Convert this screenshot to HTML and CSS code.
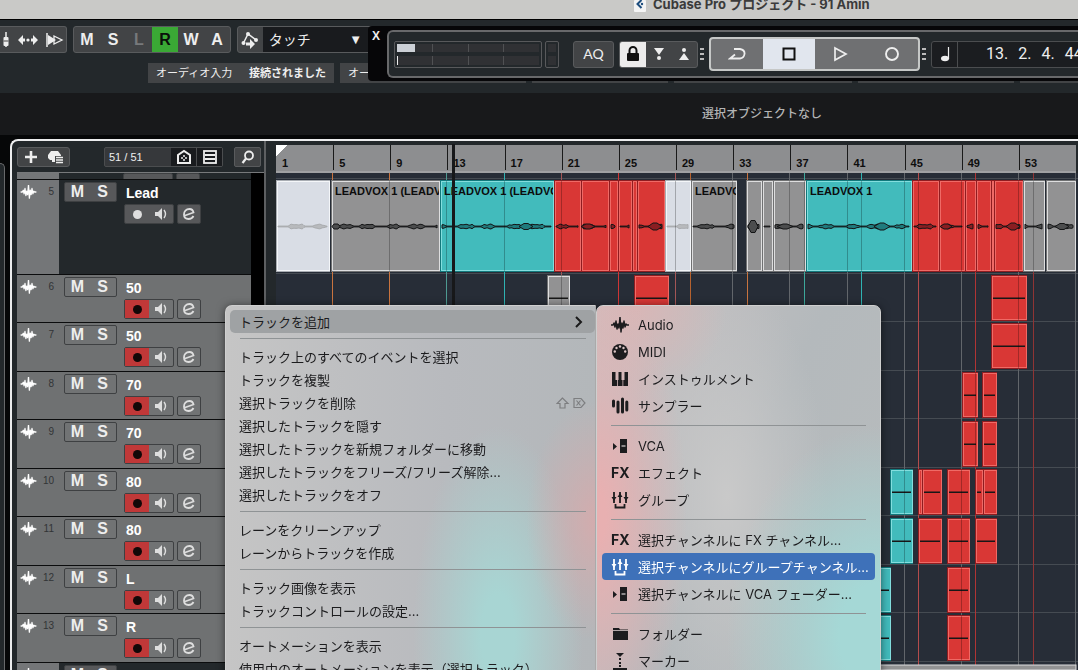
FILE: index.html
```html
<!DOCTYPE html>
<html lang="ja">
<head>
<meta charset="utf-8">
<title>Cubase Pro プロジェクト - 91 Amin</title>
<link rel="stylesheet" href="styles.css">
</head>
<body>
<svg class="defs" aria-hidden="true">
  <symbol id="i-wave" viewBox="0 0 18 16"><path d="M0 8h2l1-2 1 4 1-6 1 8 1-5 1 4 1-11 1 15 1-9 1 5 1-7 1 6 1-3 1 1h2" fill="none" stroke="currentColor" stroke-width="1.5" stroke-linejoin="round"/></symbol>
  <symbol id="i-spk" viewBox="0 0 14 14"><path d="M1 5h3l4-4v12L4 9H1z" fill="currentColor"/><path d="M10 3q3 4 0 8" fill="none" stroke="currentColor" stroke-width="1.4"/></symbol>
  <symbol id="i-e" viewBox="0 0 14 14"><path d="M3 8.500 11.500 5.500C11 3 9 2 7.500 2 4 2 2 4.500 2 7.500 2 10.500 4 12 6.500 12c2 0 4-1 5-3" fill="none" stroke="currentColor" stroke-width="1.800"/></symbol>
  <symbol id="i-group" viewBox="0 0 18 18"><path d="M3 1v11M9 1v11M15 1v11M4.500 13v3.500h9V13" fill="none" stroke="currentColor" stroke-width="1.8"/><path d="M.5 6h5L3 10zM6.500 6 9 2l2.500 4zM12.500 6h5L15 10z" fill="currentColor"/></symbol>
  <symbol id="i-vca" viewBox="0 0 18 18"><path d="M2 6l4 3.500L2 13zM9 2h7v14H9z" fill="currentColor"/><path d="M10.500 9h4" stroke="#d5d0d0" stroke-width="1.200"/></symbol>
</svg>
<div class="app">
  <header class="titlebar">
    <svg class="doc" viewBox="0 0 12 12"><rect width="12" height="12" rx="1" fill="#f4f4f4"/><path d="M7.500 0 3.500 4l4 4" fill="none" stroke="#1d4d7d" stroke-width="2"/><circle cx="8" cy="4" r="1.200" fill="#1d4d7d"/></svg>
    <span>Cubase Pro プロジェクト - 91 Amin</span>
  </header>

  <section class="toolbar">
    <div class="tools">
      <div class="group first">
        <button aria-label="ミキサー"><svg width="14" height="18" viewBox="0 0 14 18"><path d="M2 1v14M10 1v15" stroke="#eee" stroke-width="1.5"/><rect x="7.500" y="6" width="5" height="9" rx="1" fill="#eee"/><path d="M7.500 10h5" stroke="#444"/></svg></button>
        <button aria-label="幅"><svg width="20" height="12" viewBox="0 0 20 12"><path d="M0 6l5-5v3.500h2v3H5V11zM20 6l-5-5v3.500h-2v3h2V11z" fill="#eee"/><circle cx="10" cy="6" r="1.600" fill="#eee"/></svg></button>
        <button aria-label="早送り"><svg width="18" height="14" viewBox="0 0 18 14"><path d="M1 0v14" stroke="#eee" stroke-width="1.500"/><path d="M2 2l8 5-8 5z" fill="#eee"/><path d="M8 3l8 4-8 4z" fill="none" stroke="#eee" stroke-width="1.300"/></svg></button>
      </div>
      <div class="group letters">
        <button>M</button><button>S</button><button class="off">L</button><button class="read">R</button><button>W</button><button>A</button>
      </div>
      <div class="group auto">
        <button aria-label="オートメーション"><svg width="18" height="18" viewBox="0 0 18 18"><path d="M2.500 12 7 3l8 6" fill="none" stroke="#eee" stroke-width="1.500"/><circle cx="7" cy="3" r="2" fill="#eee"/><circle cx="2.500" cy="12" r="2" fill="#eee"/><circle cx="15" cy="9" r="2" fill="#eee"/><path d="M5 11.500h4V8l5 5-5 5v-3.500H5z" fill="#eee"/></svg></button>
        <select aria-label="オートメーションモード"><option>タッチ</option></select>
        <span class="caret">▼</span>
      </div>
    </div>
    <div class="chips">
      <div class="chip"><span>オーディオ入力</span><b>接続されました</b></div>
      <div class="chip"><span>オーディオ出力</span></div>
      <div class="chip"></div><div class="chip"></div><div class="chip"></div><div class="chip"></div>
    </div>
    <div class="transport">
      <button class="close" aria-label="閉じる">X</button>
      <div class="frame">
        <div class="meter"><div class="lane"><i></i><i></i><i></i><i></i></div><div class="lane low"><i></i><i></i><i></i><i></i></div></div>
        <div class="meter mini"><div class="lane"><i></i></div><div class="lane low"><i></i></div></div>
        <button class="aq">AQ</button>
        <div class="punch">
          <button class="lock" aria-label="ロック"><svg width="14" height="16" viewBox="0 0 14 16"><path d="M3.500 8V4.500a3.500 3.500 0 0 1 7 0V8" fill="none" stroke="#111" stroke-width="2"/><rect x="1" y="7" width="12" height="8" rx="1" fill="#111"/></svg></button>
          <button aria-label="パンチイン"><svg width="12" height="14" viewBox="0 0 12 14"><path d="M1 1h10L6 8z" fill="#eee"/><circle cx="6" cy="11" r="2" fill="#eee"/></svg></button>
          <button aria-label="パンチアウト"><svg width="12" height="14" viewBox="0 0 12 14"><path d="M1 13h10L6 6z" fill="#eee"/><circle cx="6" cy="3" r="2" fill="#eee"/></svg></button>
        </div>
        <span class="dots"></span>
        <div class="play">
          <button aria-label="サイクル"><svg width="18" height="14" viewBox="0 0 18 14"><path d="M6 2h6q5 1 4.500 5-.5 4-4.500 4.500H2L7 7.500" fill="none" stroke="#eee" stroke-width="1.800"/></svg></button>
          <button class="stop" aria-label="停止"><svg width="14" height="14" viewBox="0 0 14 14"><rect x="1.500" y="1.500" width="11" height="11" fill="none" stroke="#111" stroke-width="2"/></svg></button>
          <button aria-label="再生"><svg width="16" height="16" viewBox="0 0 16 16"><path d="M3 2l11 6-11 6z" fill="none" stroke="#eee" stroke-width="1.700"/></svg></button>
          <button aria-label="録音"><svg width="16" height="16" viewBox="0 0 16 16"><circle cx="8" cy="8" r="6" fill="none" stroke="#eee" stroke-width="1.900"/></svg></button>
        </div>
        <span class="dots"></span>
        <div class="position">
          <button aria-label="小節と拍"><svg width="12" height="16" viewBox="0 0 12 16"><path d="M9.500 1v12" stroke="#eee" stroke-width="1.200"/><ellipse cx="6" cy="12.500" rx="4" ry="2.800" fill="#eee"/></svg></button>
          <div class="time"><span>13.</span><span>2.</span><span>4.</span><span>44</span></div>
        </div>
      </div>
    </div>
  </section>

  <div class="info">選択オブジェクトなし</div>

  <main class="work">
    <div class="side"></div>
    <div class="project">
      <section class="list">
        <div class="listhead">
          <div class="group small">
            <button aria-label="トラックを追加"><svg width="14" height="14" viewBox="0 0 14 14"><path d="M7 1v12M1 7h12" stroke="#eee" stroke-width="2.600"/></svg></button>
            <button aria-label="プリセット"><svg width="18" height="14" viewBox="0 0 18 14"><path d="M4 1h7l3 4v1H8v6H5v-2H3L1 8V5z" fill="#eee"/><path d="M9 7.500h7M9 10h7M9 12.500h7" stroke="#eee" stroke-width="1.400"/></svg></button>
          </div>
          <div class="count"><span>51 / 51</span>
            <button aria-label="表示"><svg width="16" height="16" viewBox="0 0 16 16"><path d="M2 14V6l6-4 6 4v8z" fill="none" stroke="#eee" stroke-width="2"/><path d="M8 6v2M8 10v2M5 9h2M9 9h2" stroke="#eee" stroke-width="1.500"/></svg></button>
            <button aria-label="リスト"><svg width="14" height="14" viewBox="0 0 14 14"><rect x="1" y="1" width="12" height="12" fill="none" stroke="#eee" stroke-width="1.800"/><path d="M2 5h10M2 9h10" stroke="#eee" stroke-width="1.800"/></svg></button>
          </div>
          <button class="find" aria-label="検索"><svg width="14" height="14" viewBox="0 0 14 14"><circle cx="8" cy="5.500" r="4" fill="none" stroke="#eee" stroke-width="1.800"/><path d="M5 8.500 1.500 13" stroke="#eee" stroke-width="2.200"/></svg></button>
        </div>
        <div class="tracks">
          <div class="track sliver"><div class="tag"></div><div class="body"><div class="ctl"><div class="pair"></div><div class="one"></div></div></div></div>
          <div class="track tall"><div class="tag"><svg><use href="#i-wave"/></svg><span>5</span></div><div class="body"><div class="ms"><button>M</button><button>S</button></div><div class="main"><b>Lead</b><div class="ctl"><div class="pair"><button class="rec" aria-label="録音"></button><button aria-label="モニター"><svg><use href="#i-spk"/></svg></button></div><button class="one" aria-label="編集"><svg><use href="#i-e"/></svg></button></div></div></div></div>
          <div class="track sel"><div class="tag"><svg><use href="#i-wave"/></svg><span>6</span></div><div class="body"><div class="ms"><button>M</button><button>S</button></div><div class="main"><b>50</b><div class="ctl"><div class="pair"><button class="rec" aria-label="録音"></button><button aria-label="モニター"><svg><use href="#i-spk"/></svg></button></div><button class="one" aria-label="編集"><svg><use href="#i-e"/></svg></button></div></div></div></div>
          <div class="track sel"><div class="tag"><svg><use href="#i-wave"/></svg><span>7</span></div><div class="body"><div class="ms"><button>M</button><button>S</button></div><div class="main"><b>50</b><div class="ctl"><div class="pair"><button class="rec" aria-label="録音"></button><button aria-label="モニター"><svg><use href="#i-spk"/></svg></button></div><button class="one" aria-label="編集"><svg><use href="#i-e"/></svg></button></div></div></div></div>
          <div class="track sel"><div class="tag"><svg><use href="#i-wave"/></svg><span>8</span></div><div class="body"><div class="ms"><button>M</button><button>S</button></div><div class="main"><b>70</b><div class="ctl"><div class="pair"><button class="rec" aria-label="録音"></button><button aria-label="モニター"><svg><use href="#i-spk"/></svg></button></div><button class="one" aria-label="編集"><svg><use href="#i-e"/></svg></button></div></div></div></div>
          <div class="track sel"><div class="tag"><svg><use href="#i-wave"/></svg><span>9</span></div><div class="body"><div class="ms"><button>M</button><button>S</button></div><div class="main"><b>70</b><div class="ctl"><div class="pair"><button class="rec" aria-label="録音"></button><button aria-label="モニター"><svg><use href="#i-spk"/></svg></button></div><button class="one" aria-label="編集"><svg><use href="#i-e"/></svg></button></div></div></div></div>
          <div class="track sel"><div class="tag"><svg><use href="#i-wave"/></svg><span>10</span></div><div class="body"><div class="ms"><button>M</button><button>S</button></div><div class="main"><b>80</b><div class="ctl"><div class="pair"><button class="rec" aria-label="録音"></button><button aria-label="モニター"><svg><use href="#i-spk"/></svg></button></div><button class="one" aria-label="編集"><svg><use href="#i-e"/></svg></button></div></div></div></div>
          <div class="track sel"><div class="tag"><svg><use href="#i-wave"/></svg><span>11</span></div><div class="body"><div class="ms"><button>M</button><button>S</button></div><div class="main"><b>80</b><div class="ctl"><div class="pair"><button class="rec" aria-label="録音"></button><button aria-label="モニター"><svg><use href="#i-spk"/></svg></button></div><button class="one" aria-label="編集"><svg><use href="#i-e"/></svg></button></div></div></div></div>
          <div class="track sel"><div class="tag"><svg><use href="#i-wave"/></svg><span>12</span></div><div class="body"><div class="ms"><button>M</button><button>S</button></div><div class="main"><b>L</b><div class="ctl"><div class="pair"><button class="rec" aria-label="録音"></button><button aria-label="モニター"><svg><use href="#i-spk"/></svg></button></div><button class="one" aria-label="編集"><svg><use href="#i-e"/></svg></button></div></div></div></div>
          <div class="track sel"><div class="tag"><svg><use href="#i-wave"/></svg><span>13</span></div><div class="body"><div class="ms"><button>M</button><button>S</button></div><div class="main"><b>R</b><div class="ctl"><div class="pair"><button class="rec" aria-label="録音"></button><button aria-label="モニター"><svg><use href="#i-spk"/></svg></button></div><button class="one" aria-label="編集"><svg><use href="#i-e"/></svg></button></div></div></div></div>
          <div class="track"><div class="tag"><svg><use href="#i-wave"/></svg></div><div class="body"><div class="ms"><button>M</button><button>S</button></div></div></div>
        </div>
      </section>
      <section class="arrange">
        <ol class="ruler"><li>1</li><li>5</li><li>9</li><li>13</li><li>17</li><li>21</li><li>25</li><li>29</li><li>33</li><li>37</li><li>41</li><li>45</li><li>49</li><li>53</li></ol>
        <svg class="canvas" id="canvas" viewBox="276 173 802 497" width="802" height="497"></svg>
        <div class="playhead"></div>
      </section>
    </div>
  </main>

  <nav class="menus">
    <div class="menu main-menu">
      <button class="open"><span>トラックを追加</span><svg width="8" height="12" viewBox="0 0 8 12"><path d="M1 1l5 5-5 5" fill="none" stroke="#1a1a1a" stroke-width="2"/></svg></button>
      <hr>
      <button>トラック上のすべてのイベントを選択</button>
      <button>トラックを複製</button>
      <button class="key"><span>選択トラックを削除</span><svg width="30" height="12" viewBox="0 0 30 12"><path d="M6.500 1 1 6.500h3V11h5V6.500h3zM18 1.500h7l4 4.500-4 4.500h-7zM20.500 3.500l4 5M24.500 3.500l-4 5" fill="none" stroke="#7d7e80" stroke-width="1.200"/></svg></button>
      <button>選択したトラックを隠す</button>
      <button>選択したトラックを新規フォルダーに移動</button>
      <button>選択したトラックをフリーズ/フリーズ解除...</button>
      <button>選択したトラックをオフ</button>
      <hr>
      <button>レーンをクリーンアップ</button>
      <button>レーンからトラックを作成</button>
      <hr>
      <button>トラック画像を表示</button>
      <button>トラックコントロールの設定...</button>
      <hr>
      <button>オートメーションを表示</button>
      <button>使用中のオートメーションを表示（選択トラック）</button>
    </div>
    <div class="menu sub-menu">
      <button><svg viewBox="0 0 18 16"><use href="#i-wave"/></svg>Audio</button>
      <button><svg viewBox="0 0 18 18"><circle cx="9" cy="9" r="8" fill="currentColor"/><g fill="#dcc5c5"><circle cx="3.800" cy="8.500" r="1.200"/><circle cx="5.500" cy="5" r="1.200"/><circle cx="9" cy="3.500" r="1.200"/><circle cx="12.500" cy="5" r="1.200"/><circle cx="14.200" cy="8.500" r="1.200"/></g></svg>MIDI</button>
      <button><svg viewBox="0 0 18 18"><path d="M1 2h3.500v8H6v6H1zM7.500 2h3v8h1v6H6.800v-6h.7zM13.500 2H17v14h-4.700v-6h1.200z" fill="currentColor"/></svg>インストゥルメント</button>
      <button><svg viewBox="0 0 18 18"><path d="M2.500 4v5M7 5v10M11.500 2v13M15.800 5v8" stroke="currentColor" stroke-width="3" stroke-linecap="round"/></svg>サンプラー</button>
      <hr>
      <button><svg><use href="#i-vca"/></svg>VCA</button>
      <button><b class="fx">FX</b>エフェクト</button>
      <button><svg><use href="#i-group"/></svg>グループ</button>
      <hr>
      <button><b class="fx">FX</b>選択チャンネルに FX チャンネル...</button>
      <button class="active"><svg><use href="#i-group"/></svg>選択チャンネルにグループチャンネル...</button>
      <button><svg><use href="#i-vca"/></svg>選択チャンネルに VCA フェーダー...</button>
      <hr>
      <button><svg viewBox="0 0 18 18"><path d="M2 3h6l1 1.500h8V15H2z" fill="currentColor"/><path d="M2 5.500h15" stroke="#d8cccc" stroke-width=".8"/></svg>フォルダー</button>
      <button><svg viewBox="0 0 18 18"><path d="M5 1h8L9 5z" fill="currentColor"/><path d="M9 6v2M9 10v2M9 13v2M2 17h14" stroke="currentColor" stroke-width="2"/></svg>マーカー</button>
    </div>
  </nav>
</div>
<script src="timeline.js"></script>
</body>
</html>
```
FILE: styles.css
```css
* { box-sizing: border-box; }
body { margin: 0; background: #060708; color: #eee; font: 13px/16px "Liberation Sans", "Noto Sans CJK JP", sans-serif; }
button, select { font: inherit; color: inherit; background: none; border: 0; padding: 0; margin: 0; }
button { display: flex; align-items: center; justify-content: center; }
svg { flex: none; display: block; }
.defs { position: absolute; width: 0; height: 0; }
.app { position: relative; height: 100vh; overflow: hidden; display: flex; flex-direction: column; }

.titlebar { flex: none; height: 20px; padding-left: 634px; display: flex; gap: 7px; background: #c9c9c7; border-bottom: 1px solid #000; color: #3b3b3b; font: bold 13px/8px Inter, "Noto Sans CJK JP", sans-serif; white-space: nowrap; }
.doc { width: 12px; height: 12px; }

.toolbar { flex: none; position: relative; height: 73px; padding-top: 6px; background: #23282b; }
.tools { display: flex; gap: 6px; }
.group { display: flex; height: 27px; background: #424446; border: 1px solid #595b5d; border-radius: 3px; }
.first { width: 67px; border-left: 0; border-radius: 0 3px 3px 0; justify-content: space-between; padding: 0 2px 0 0; }
.first button:first-child { width: 10px; justify-content: flex-end; }
.letters { width: 158px; font-weight: bold; font-size: 16px; }
.letters button { flex: 1; }
.letters .off { color: #77797b; }
.letters .read { background: #3aa935; color: #0a0f0a; }
.auto { width: 140px; }
.auto button { width: 25px; }
.auto select { width: 87px; padding-left: 6px; appearance: none; background: #191b1e; font-size: 14px; }
.caret { width: 27px; background: #191b1e; line-height: 25px; font-size: 13px; }
.chips { display: flex; gap: 6px; margin: 10px 0 0 148px; overflow: hidden; }
.chip { flex: none; display: flex; justify-content: space-between; height: 20px; padding: 0 8px; background: #424446; font-size: 11px; line-height: 20px; width: 186px; }
.chip:nth-child(3) { width: 136px; }
.chip:nth-child(4) { width: 178px; }
.chip:nth-child(5) { width: 156px; }

.transport { position: absolute; left: 368px; right: 0; top: 6px; height: 55px; padding: 4px 0 0 3px; display: flex; align-items: flex-start; background: #060608; border-radius: 4px 0 0 4px; overflow: hidden; }
.close { flex: none; width: 10px; height: 11px; font-weight: bold; font-size: 12px; }
.frame { flex: 1; min-width: 0; height: 48px; margin-left: 6px; padding-left: 5px; display: flex; align-items: center; background: #23282b; border: 2px solid #68696b; border-right: 0; border-radius: 6px 0 0 6px; }
.frame > * { flex: none; }
.meter { width: 148px; height: 27px; padding: 2px; display: grid; gap: 4px; border: 1px solid #58595b; border-radius: 2px; }
.meter.mini { width: 14px; margin-left: 3px; }
.lane { display: grid; grid-auto-flow: column; grid-auto-columns: 1fr; gap: 1px; background: #505153; }
.lane i { background: #303134; }
.lane:first-child i:first-child { background: linear-gradient(90deg, #ccd0d6 18px, #303134 18px); }
.low i:first-child { border-left: 1px solid #eee; }
.mini .lane:first-child i:first-child { background: #303134; }
.mini .low i:first-child { border: 0; }
.aq { width: 41px; height: 27px; margin-left: 14px; background: #424446; border: 1px solid #595b5d; border-radius: 3px; font: 14px/16px Lato, sans-serif; }
.punch { display: flex; width: 79px; height: 27px; margin: 0 2px 0 5px; background: #424446; border: 1px solid #595b5d; border-radius: 3px; overflow: hidden; }
.punch button { flex: 1; }
.punch .lock { background: #ececec; }
.dots { width: 4px; height: 12px; background: repeating-linear-gradient(#bbb 0 2px, transparent 2px 5px); }
.play { display: flex; width: 211px; height: 34px; margin: 0 2px 0 5px; background: #6f7072; border: 2px solid #c6c8c7; border-radius: 4px; }
.play button { flex: 1; }
.play .stop { background: #e1e6ee; }
.position { display: flex; width: 200px; height: 27px; margin-left: 5px; background: #1b1d20; border: 1px solid #4b4d4f; border-radius: 3px; }
.position button { width: 26px; border-right: 1px solid #4b4d4f; }
.time { display: flex; gap: 10px; padding-left: 28px; font: 16px/23px Roboto, sans-serif; }

.info { flex: none; height: 42px; padding-left: 702px; background: #18191b; color: #b3b4b5; font-size: 12px; line-height: 43px; font-weight: 500; }

.work { flex: 1; min-height: 0; display: flex; gap: 5px; padding-top: 4px; background: #060708; }
.side { flex: none; width: 5px; margin-top: 24px; background: #23282b; border: solid #68696b; border-width: 1px 1px 0 0; border-radius: 0 5px 0 0; }
.project { flex: 1; min-width: 0; display: flex; background: #23282b; border: solid #ecedee; border-width: 2px 0 0 2px; border-radius: 8px 0 0 0; }
.list { flex: none; width: 254px; padding-left: 5px; border-right: 2px solid #5d5f61; }
.listhead { display: flex; align-items: center; height: 32px; border-bottom: 1px solid #77797b; }
.small { width: 53px; height: 20px; }
.small button { flex: 1; }
.count { display: flex; width: 119px; height: 20px; margin: 0 11px 0 34px; background: #36383b; border: 1px solid #4b4d4f; border-radius: 2px; font-size: 11px; line-height: 18px; }
.count span { width: 66px; padding-left: 4px; }
.count button { flex: 1; background: #191b1e; }
.count button + button { border-left: 1px solid #4b4d4f; }
.find { width: 27px; height: 20px; background: #424446; border: 1px solid #595b5d; border-radius: 2px; }
.tracks { padding-right: 13px; background: #000; }
.track { display: flex; height: 48px; border-top: 1px solid #0b0c0d; background: #23282b; }
.track:nth-child(even) { height: 49px; }
.track.tall { height: 95px; }
.track.sliver { height: 6px; border: 0; overflow: hidden; }
.sliver .ctl { height: 2px; padding-left: 60px; }
.tag { flex: none; width: 42px; padding: 5px 5px 0 3px; display: flex; justify-content: space-between; background: #747678; color: #323436; font-size: 10px; }
.tag svg { width: 17px; height: 14px; color: #fff; }
.tag span { line-height: 14px; }
.sel, .sel .tag { background: #6f7172; }
.body { display: flex; align-items: flex-start; gap: 8px; padding: 2px 0 0 5px; }
.sliver .body { padding-top: 0; }
.ms { display: flex; width: 53px; height: 20px; padding-right: 1px; font-weight: bold; font-size: 16px; }
.ms button { flex: 1; }
.ms, .pair, .one { background: #57585a; border: 1px solid #3e4042; border-radius: 2px; }
.sel .ms, .sel .pair, .sel .one { background: #717374; }
.main b { display: block; height: 22px; padding-left: 1px; font-size: 14px; line-height: 22px; color: #fff; }
.ctl { display: flex; gap: 3px; margin-left: -1px; }
.pair { display: flex; width: 50px; height: 20px; }
.pair button { flex: 1; }
.one { width: 24px; height: 20px; }
.ctl svg { width: 14px; height: 14px; color: #dedede; }
.rec::before { content: ""; width: 9px; height: 9px; border-radius: 50%; background: #dedede; }
.sel .rec { background: #c03838; }
.sel .rec::before { background: #120808; }

.arrange { position: relative; flex: 1; min-width: 0; padding: 4px 0 0 10px; overflow: hidden; }
.ruler { display: grid; grid-template-columns: repeat(14, 1fr); width: 800px; height: 28px; margin: 0; padding: 0; list-style: none; background: linear-gradient(135deg, #fff 8px, transparent 8px), #8d8e90; border-bottom: 2px solid #a0a1a3; color: #0d0d0d; font-weight: bold; font-size: 11px; line-height: 36px; }
.ruler li { padding-left: 5px; border-left: 1px solid #1a1a1a; height: 25px; }
.ruler li:first-child { border-color: transparent; }
.canvas text { font: bold 11px "Liberation Sans", sans-serif; }
.playhead { position: absolute; left: 186px; top: 3px; bottom: 0; width: 3px; background: #17181a; }

.menus { position: absolute; left: 225px; top: 305px; display: flex; color: #1c1c1e; font: 13px/16px Inter, "Noto Sans CJK JP", sans-serif; white-space: nowrap; filter: drop-shadow(0 1px 4px #0008); }
.menu { padding: 5px; border: 1px solid #cfcfcf; }
.menu button { width: 100%; }
.menu hr { margin: 0; border: 0; height: 1px; background: #8f9395; }
.main-menu { width: 371px; padding: 4px 0 5px 4px; border-right-color: #aaa; border-radius: 7px 0 0 0;
  background: radial-gradient(ellipse 70px 120px at 370px 215px, #dba9aacc, transparent), radial-gradient(ellipse 85px 210px at 272px 330px, #a8d5d3 20%, transparent), linear-gradient(90deg, #c5c5c5, #b8babe 60%, #b3b7ba); }
.main-menu button { height: 23px; padding: 0 12px 0 9px; justify-content: space-between; }
.main-menu hr { margin: 5px 9px 6px 10px; }
.main-menu .open { background: #9fa2a4; border-radius: 5px; }
.main-menu .key { padding-right: 9px; }
.sub-menu { width: 285px; border-radius: 7px 7px 0 0;
  background: radial-gradient(ellipse 90px 240px at 0 210px, #e8b0b1 10%, transparent), radial-gradient(ellipse 90px 90px at 40px 0, #d8b6b6, transparent), radial-gradient(ellipse 150px 210px at 280px 330px, #a5d8d6 25%, transparent), radial-gradient(ellipse 100px 220px at 130px 190px, #c9c9c9, transparent), linear-gradient(115deg, #c9c2c3, #b4b9bc 50%, #b8bcbd); }
.sub-menu button { height: 27px; gap: 9px; padding-left: 9px; justify-content: flex-start; border-radius: 4px; }
.sub-menu svg { width: 18px; height: 18px; }
.sub-menu hr { margin: 6px 9px; }
.fx { width: 18px; font-size: 14px; }
.sub-menu .active { background: #3e71b9; color: #fff; }
```
FILE: timeline.js
```js
const svg = document.getElementById('canvas');
const parts = [];
const rect = (x, y, w, h, fill, extra = '') => parts.push(`<rect x="${x}" y="${y}" width="${w}" height="${h}" fill="${fill}" ${extra}/>`);

rect(276, 173, 802, 497, '#272d37');
[178, 273, 321, 370, 418, 467, 515, 564, 612, 661].forEach(y => rect(276, y, 802, 1, '#454b52'));

// [x, colour] of the bar lines and colour markers
const lines = [[332, '#c9743f'], [389, '#c9743f'], [446, '#4e9a92'], [504, '#2fb3b3'], [561, '#a35656'], [618, '#cf3535'],
  [675, '#a35656'], [690, '#b5622f'], [732, '#62666b'], [747, '#c9743f'], [789, '#62666b'], [804, '#3da89b'], [847, '#62666b'],
  [861, '#2fb3b3'], [904, '#62666b'], [918, '#b54c4c'], [961, '#62666b'], [975, '#b03434'], [1018, '#62666b'], [1033, '#8f3434'], [1075, '#62666b']];
lines.forEach(([x, c]) => rect(x, 173, 1, 497, c));

const palette = {
  red: ['#d93735', '#8f1c20', '#ef6a66', '#8a1e22'],
  teal: ['#42bbbc', '#12797c', '#83dede', '#1f7b7d'],
  grey: ['#929293', '#707172', '#dededf', '#4c4d4e'],
  white: ['#d9dde5', '#a9adb3', '#f4f6f9', '#b8babd']
};

// Closed envelope round a centre line, built of short rounded bursts
function wave(x, w, y, amp, kind) {
  const top = [], low = [];
  for (let i = 2; i <= w - 3; i++) {
    const p = x + i;
    const phrase = Math.max(0, Math.sin(p * 0.26) + 0.5 * Math.sin(p * 0.11) + 0.3);
    const a = (0.4 + Math.min(1, phrase * 1.6) * amp * (0.8 + 0.35 * Math.sin(p * 0.9) * Math.sin(p * 0.17))).toFixed(1);
    top.push(`${p},${y - a}`);
    low.unshift(`${p},${y + Number(a)}`);
  }
  const dark = kind === 'white' ? '#a9abae' : '#141516';
  parts.push(`<polygon points="${top.concat(low).join(' ')}" fill="${palette[kind][3]}" stroke="${dark}" stroke-width="1"/>`);
}

// Wider swell inside a burst: centre, half length, height
function swell(cx, half, y, h, kind) {
  parts.push(`<path d="M${cx - half} ${y}L${cx - 2} ${y - h}L${cx + 2} ${y - h}L${cx + half} ${y}L${cx + 2} ${y + h}L${cx - 2} ${y + h}Z" fill="${palette[kind][3]}" stroke="#141516"/>`);
}

function clip(x, end, y, h, kind, label) {
  const [fill, edge, light] = palette[kind];
  const w = end - x;
  rect(x, y, w, h, edge);
  rect(x + 1.5, y + 1.5, Math.max(1, w - 2), h - 3, fill, `stroke="${light}"`);
  if (w > 7) {
    if (h > 60) wave(x, w, y + 46.5, 1.8, kind);
    else rect(x + 2, y + h / 2 - 0.5, w - 4, 1.5, '#171717');
  }
  lines.filter(([lx]) => lx > x + 1 && lx < end - 1).forEach(([lx]) => rect(lx, y + 1, 1, h - 2, '#00000040'));
  if (label) parts.push(`<svg x="${x}" y="${y}" width="${w - 1}" height="20"><text x="4" y="15" fill="#0c0c0c">${label}</text></svg>`);
}

[[276, 330, 'white'], [331, 440, 'grey', 'LEADVOX 1 (LEADVOX 1)'], [440, 554, 'teal', 'LEADVOX 1 (LEADVOX 1)'],
  [554, 581, 'red'], [581, 609, 'red'], [609, 618, 'red'], [618, 632, 'red'], [632, 637, 'red'], [637, 665, 'red'],
  [665, 691, 'white'], [691, 737, 'grey', 'LEADVOX'], [746, 762, 'grey'], [762, 773, 'grey'], [773, 806, 'grey'],
  [806, 912, 'teal', 'LEADVOX 1'], [912, 939, 'red'], [939, 965, 'red'], [965, 976, 'red'], [976, 991, 'red'],
  [991, 994, 'red'], [994, 1023, 'red'], [1023, 1045, 'grey'], [1046, 1076, 'grey']
].forEach(([a, b, kind, label]) => clip(a, b, 180, 92, kind, label));

[[336, 4, 2.5, 'grey'], [526, 7, 3, 'teal'], [588, 7, 2.5, 'red'], [655, 7, 3.5, 'red'], [753, 5, 6, 'grey'], [785, 8, 2.5, 'grey'],
  [882, 8, 3.5, 'teal'], [946, 6, 2.5, 'red'], [1013, 7, 3.5, 'red'], [1062, 7, 3, 'grey']
].forEach(([cx, half, h, kind]) => swell(cx, half, 226.5, h, kind));

[[547, 570, 275, 'grey'], [634, 669, 275, 'red'], [991, 1027, 275, 'red'], [991, 1027, 323, 'red'],
  [962, 978, 372, 'red'], [982, 997, 372, 'red'], [962, 978, 421, 'red'], [982, 997, 421, 'red'],
  [890, 913, 469, 'teal'], [918, 922, 469, 'red'], [922, 942, 469, 'red'], [947, 970, 469, 'red'], [975, 983, 469, 'red'], [983, 997, 469, 'red'],
  [890, 913, 518, 'teal'], [918, 942, 518, 'red'], [947, 970, 518, 'red'], [975, 997, 518, 'red'],
  [868, 891, 567, 'teal'], [947, 970, 567, 'red'], [868, 891, 615, 'teal'], [947, 970, 615, 'red']
].forEach(([a, b, y, kind]) => clip(a, b, y, 46, kind));

rect(276, 665, 800, 5, '#929293', 'stroke="#dededf"');
svg.innerHTML = parts.join('');
```
